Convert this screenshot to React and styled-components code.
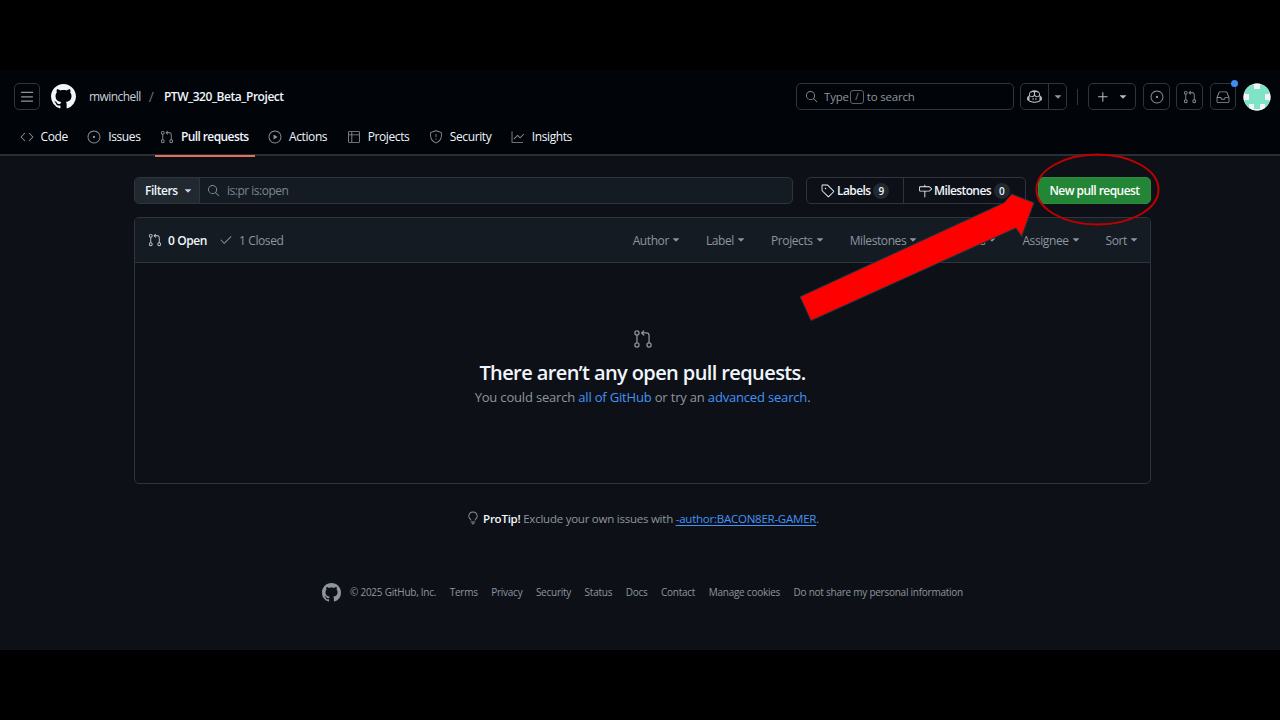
import React from "react";
import styled, { createGlobalStyle } from "styled-components";
import {
  GoCode, GoIssueOpened, GoGitPullRequest, GoPlay, GoTable,
  GoShield, GoGraph, GoSearch, GoCopilot, GoTriangleDown, GoPlus, GoInbox, GoTag,
  GoMilestone, GoCheck, GoLightBulb,
} from "react-icons/go";

const Global = createGlobalStyle`
  html, body { margin: 0; padding: 0; background: #000; }
  body { font-family: "Open Sans", "Noto Sans", sans-serif; font-size: 12px; color: #f0f6fc; }
  * { box-sizing: border-box; }
`;

const Frame = styled.div`
  position: relative; width: 1280px; height: 720px; padding: 70px 0; background: #000; overflow: hidden;
`;
const Page = styled.div`height: 580px; background: #0d1117; display: flex; flex-direction: column;`;
const Header = styled.header`
  height: 86px; background: #010409; border-bottom: 2px solid #2a2f36; padding: 13px 9px 0 14px;
  display: flex; flex-direction: column;
`;
const TopRow = styled.div`display: flex; align-items: center; height: 27px;`;
const IconBtn = styled.div`
  width: ${p => p.$w || 27}px; height: 27px; margin-left: ${p => p.$ml || 0}px;
  border: 1px solid #2f353d; border-radius: 5px; color: #8e959e;
  display: flex; align-items: center; justify-content: center; flex: none; position: relative;
`;
const Logo = styled.div`margin: 0 13px 0 11px; color: #f0f6fc; display: flex;`;
const Crumb = styled.span`
  font-size: 12px; font-weight: ${p => p.$strong ? 600 : 400};
  color: ${p => p.$strong ? "#f0f6fc" : "#c9d1d9"}; letter-spacing: ${p => p.$strong ? -0.45 : -0.55}px; white-space: nowrap;
`;
const Slash = styled.span`color: #6a727c; font-size: 14px; margin: 0 10px 0 8px;`;
const Spacer = styled.div`flex: 1;`;
const GlobalSearch = styled.div`
  width: 218px; height: 27px; border: 1px solid #2f353d; border-radius: 5px; color: #8e959e;
  display: flex; align-items: center; padding-left: 8px; gap: 6px; font-size: 11.5px; letter-spacing: -0.2px;
`;
const Kbd = styled.span`
  width: 14px; height: 14px; border: 1px solid #5b626b; border-radius: 3px; font-size: 9px;
  display: inline-flex; align-items: center; justify-content: center; margin: 0 -3px 0 -5px;
`;
const SplitBtn = styled.div`
  height: 27px; margin-left: ${p => p.$ml || 0}px; border: 1px solid #2f353d; border-radius: 5px; color: #8e959e;
  display: flex; align-items: center; flex: none;
`;
const SplitPart = styled.div`
  width: ${p => p.$w}px; height: 100%; display: flex; align-items: center; justify-content: center; gap: ${p => p.$gap || 0}px;
  color: ${p => p.$light ? "#b8bec6" : "inherit"};
  & + & { border-left: 1px solid #2f353d; }
`;
const VSep = styled.div`width: 1px; height: 16px; background: #2f353d; margin-left: 10px; flex: none;`;
const Dot = styled.span`
  position: absolute; top: -4px; right: -3px; width: 7px; height: 7px; border-radius: 50%; background: #3f8cf5;
`;
const Avatar = styled.svg`margin-left: 7px; flex: none; display: block;`;

const Tabs = styled.nav`display: flex; margin: 12px 0 0 0.5px; height: 34px; gap: 8.5px;`;
const Tab = styled.div`
  display: flex; align-items: center; gap: 7px; padding: 0 6px 4px 5px; margin-bottom: -2px; height: 35px;
  font-size: 12px; letter-spacing: ${p => p.$active ? -0.6 : -0.4}px; white-space: nowrap; color: #f0f6fc;
  font-weight: ${p => p.$active ? 600 : 400};
  border-bottom: 2px solid ${p => p.$active ? "#e0705a" : "transparent"};
  svg { color: #8e959e; }
`;

const Main = styled.main`width: 1017px; margin: 21px 0 0 134px;`;
const FilterRow = styled.div`display: flex; align-items: center; height: 27px;`;
const FilterGroup = styled.div`
  width: 659px; height: 27px; display: flex; border: 1px solid #2f353d; border-radius: 5px; background: #151b23;
`;
const FiltersBtn = styled.div`
  width: 65px; background: #212830; border-right: 1px solid #2f353d; border-radius: 4px 0 0 4px; font-weight: 600; font-size: 12px;
  display: flex; align-items: center; padding-left: 10px; gap: 4px; letter-spacing: -0.45px; color: #f0f6fc;
  svg { color: #c9d1d9; }
`;
const FilterInput = styled.div`
  display: flex; align-items: center; gap: 7px; padding-left: 7px; color: #7d8590; font-size: 12px; letter-spacing: -0.5px;
`;
const LabelGroup = styled.div`
  margin-left: 13px; width: 220px; height: 27px; display: flex; border: 1px solid #2f353d; border-radius: 5px;
`;
const LabelItem = styled.div`
  width: ${p => p.$w}px; display: flex; align-items: center; padding-left: ${p => p.$pl}px; gap: 2px; font-weight: 600; font-size: 12px;
  letter-spacing: -0.6px; color: #f0f6fc;
  & + & { border-left: 1px solid #2f353d; }
`;
const Count = styled.span`
  width: 16px; height: 16px; margin-left: 1px; border-radius: 50%; background: #212830; font-size: 10px;
  display: inline-flex; align-items: center; justify-content: center; letter-spacing: 0;
`;
const NewBtn = styled.div`
  margin-left: 12px; width: 113px; height: 27px; background: #238636; border-radius: 5px; border: 1px solid #2f8a40;
  display: flex; align-items: center; justify-content: center; color: #fff; font-weight: 600; font-size: 12px; letter-spacing: -0.55px;
`;

const Box = styled.section`
  margin-top: 13px; height: 267px; border: 1px solid #2f353d; border-radius: 5px; display: flex; flex-direction: column;
`;
const BoxHead = styled.div`
  height: 45px; background: #151b23; border-bottom: 1px solid #2f353d; border-radius: 5px 5px 0 0;
  display: flex; align-items: center; padding: 0 10px 0 13px;
`;
const State = styled.span`
  display: flex; align-items: center; gap: 6px; margin-right: ${p => p.$mr || 0}px; font-size: 12px; letter-spacing: -0.4px;
  font-weight: ${p => p.$on ? 600 : 400}; color: ${p => p.$on ? "#f0f6fc" : "#8e959e"};
  svg { color: ${p => p.$on ? "#c9d1d9" : "#8e959e"}; }
`;
const Sorts = styled.div`margin-left: auto; display: flex; gap: 24px;`;
const Sort = styled.span`
  display: flex; align-items: center; gap: 1px; font-size: 12px; letter-spacing: -0.4px; color: #8e959e;
`;
const Blank = styled.div`flex: 1; display: flex; flex-direction: column; align-items: center; padding-top: 66px; color: #8e959e;`;
const BlankTitle = styled.h3`
  margin: 10px 0 0; font-size: 20px; line-height: 27px; font-weight: 600; color: #f0f6fc; letter-spacing: -0.6px;
`;
const BlankText = styled.p`margin: 2px 0 0; font-size: 13px; line-height: 18px; letter-spacing: -0.18px;`;
const Link = styled.span`color: #4493f8;`;

const Tip = styled.div`
  margin-top: 24px; display: flex; justify-content: center; align-items: center; gap: 3px; color: #8e959e;
  font-size: 11.5px; letter-spacing: -0.24px; height: 20px;
  b { color: #f0f6fc; font-weight: 600; }
  u { text-underline-offset: 2px; }
`;
const Footer = styled.footer`
  margin-top: 54px; display: flex; justify-content: center; align-items: center; height: 20px; color: #8e959e;
  font-size: 10px; letter-spacing: -0.25px;
`;
const FootItem = styled.span`margin-left: ${p => p.$ml ?? 13.5}px; white-space: nowrap;`;
const Overlay = styled.svg`position: absolute; inset: 0; pointer-events: none;`;

const Caret = ({ s = 12, c }) => <GoTriangleDown size={s} color={c} />;

const GithubMark = ({ size }) => (
  <svg width={size} height={size} viewBox="0 0 16 16" fill="currentColor">
    <path d="M8 0c4.42 0 8 3.58 8 8a8.013 8.013 0 0 1-5.45 7.59c-.4.08-.55-.17-.55-.38 0-.27.01-1.13.01-2.2 0-.75-.25-1.23-.54-1.48 1.78-.2 3.65-.88 3.65-3.95 0-.88-.31-1.59-.82-2.15.08-.2.36-1.02-.08-2.12 0 0-.67-.22-2.2.82-.64-.18-1.32-.27-2-.27-.68 0-1.36.09-2 .27-1.53-1.03-2.2-.82-2.2-.82-.44 1.1-.16 1.92-.08 2.12-.51.56-.82 1.28-.82 2.15 0 3.06 1.86 3.75 3.64 3.95-.23.2-.44.55-.51 1.07-.46.21-1.61.55-2.33-.66-.15-.24-.6-.83-1.23-.82-.67.01-.27.38.01.53.34.19.73.9.82 1.13.16.45.68 1.31 2.69.94 0 .67.01 1.3.01 1.49 0 .21-.15.45-.55.38A7.995 7.995 0 0 1 0 8c0-4.42 3.58-8 8-8Z" />
  </svg>
);
const ThreeBars = ({ size }) => (
  <svg width={size} height={size} viewBox="0 0 16 16" fill="currentColor">
    <path d="M1 2.75A.75.75 0 0 1 1.75 2h12.5a.75.75 0 0 1 0 1.5H1.75A.75.75 0 0 1 1 2.75Zm0 5A.75.75 0 0 1 1.75 7h12.5a.75.75 0 0 1 0 1.5H1.75A.75.75 0 0 1 1 7.75ZM1.75 12h12.5a.75.75 0 0 1 0 1.5H1.75a.75.75 0 0 1 0-1.5Z" />
  </svg>
);

function Identicon() {
  return (
    <Avatar width="28" height="28" viewBox="0 0 28 28">
      <defs><clipPath id="av"><circle cx="14" cy="14" r="13.5" /></clipPath></defs>
      <g clipPath="url(#av)">
        <rect width="28" height="28" fill="#f2f5f3" />
        <rect x="2" y="2" width="24" height="24" fill="#7fe3c6" />
        <rect x="11" y="0" width="6" height="6" fill="#f2f5f3" />
        <rect x="0" y="11" width="6" height="6" fill="#f2f5f3" />
        <rect x="22" y="11" width="6" height="6" fill="#f2f5f3" />
        <rect x="6" y="21" width="16" height="7" fill="#f2f5f3" />
        <rect x="11" y="21" width="6" height="5" fill="#7fe3c6" />
      </g>
    </Avatar>
  );
}

const tabs = [
  [GoCode, "Code"], [GoIssueOpened, "Issues"], [GoGitPullRequest, "Pull requests", true], [GoPlay, "Actions"],
  [GoTable, "Projects"], [GoShield, "Security"], [GoGraph, "Insights"],
];
const sorts = ["Author", "Label", "Projects", "Milestones", "Reviews", "Assignee", "Sort"];
const foot = ["Terms", "Privacy", "Security", "Status", "Docs", "Contact", "Manage cookies", "Do not share my personal information"];

export default function App() {
  return (
    <Frame>
      <Global />
      <Page>
        <Header>
          <TopRow>
            <IconBtn $w={26}><ThreeBars size={14} /></IconBtn>
            <Logo><GithubMark size={25} /></Logo>
            <Crumb>mwinchell</Crumb>
            <Slash>/</Slash>
            <Crumb $strong>PTW_320_Beta_Project</Crumb>
            <Spacer />
            <GlobalSearch><GoSearch size={13} /><span>Type</span><Kbd>/</Kbd><span>to search</span></GlobalSearch>
            <SplitBtn $ml={6}>
              <SplitPart $w={27} $light><GoCopilot size={15} /></SplitPart>
              <SplitPart $w={18}><Caret /></SplitPart>
            </SplitBtn>
            <VSep />
            <SplitBtn $ml={10}>
              <SplitPart $w={46} $gap={6} $light><GoPlus size={16} /><Caret /></SplitPart>
            </SplitBtn>
            <IconBtn $ml={7}><GoIssueOpened size={14} /></IconBtn>
            <IconBtn $ml={6}><GoGitPullRequest size={14} /></IconBtn>
            <IconBtn $ml={7} $w={26}><GoInbox size={14} /><Dot /></IconBtn>
            <Identicon />
          </TopRow>
          <Tabs>
            {tabs.map(([I, t, a]) => <Tab key={t} $active={a}><I size={14} />{t}</Tab>)}
          </Tabs>
        </Header>
        <Main>
          <FilterRow>
            <FilterGroup>
              <FiltersBtn>Filters<Caret /></FiltersBtn>
              <FilterInput><GoSearch size={13} color="#8e959e" />is:pr is:open</FilterInput>
            </FilterGroup>
            <LabelGroup>
              <LabelItem $w={96} $pl={14}><GoTag size={14} />Labels<Count>9</Count></LabelItem>
              <LabelItem $w={122} $pl={14}><GoMilestone size={14} />Milestones<Count>0</Count></LabelItem>
            </LabelGroup>
            <NewBtn>New pull request</NewBtn>
          </FilterRow>
          <Box>
            <BoxHead>
              <State $on $mr={12}><GoGitPullRequest size={14} />0 Open</State>
              <State><GoCheck size={14} />1 Closed</State>
              <Sorts>{sorts.map(s => <Sort key={s}>{s}<Caret /></Sort>)}</Sorts>
            </BoxHead>
            <Blank>
              <GoGitPullRequest size={20} />
              <BlankTitle>There aren’t any open pull requests.</BlankTitle>
              <BlankText>You could search <Link>all of GitHub</Link> or try an <Link>advanced search</Link>.</BlankText>
            </Blank>
          </Box>
          <Tip>
            <GoLightBulb size={14} />
            <span><b>ProTip!</b> Exclude your own issues with <Link><u>-author:BACON8ER-GAMER</u>.</Link></span>
          </Tip>
          <Footer>
            <GithubMark size={19} />
            <FootItem $ml={9}>© 2025 GitHub, Inc.</FootItem>
            {foot.map(f => <FootItem key={f}>{f}</FootItem>)}
          </Footer>
        </Main>
      </Page>
      <Overlay width="1280" height="720" viewBox="0 0 1280 720">
        <ellipse cx="1097.5" cy="189.5" rx="61" ry="35" fill="none" stroke="#c00000" strokeWidth="2" />
        <polygon points="800,296.7 1004,202.7 1011.7,194 1034,202.7 1021.7,236.7 1016,228 811,320.7" fill="#ff0000" stroke="#0c3a44" strokeWidth="1" />
      </Overlay>
    </Frame>
  );
}
